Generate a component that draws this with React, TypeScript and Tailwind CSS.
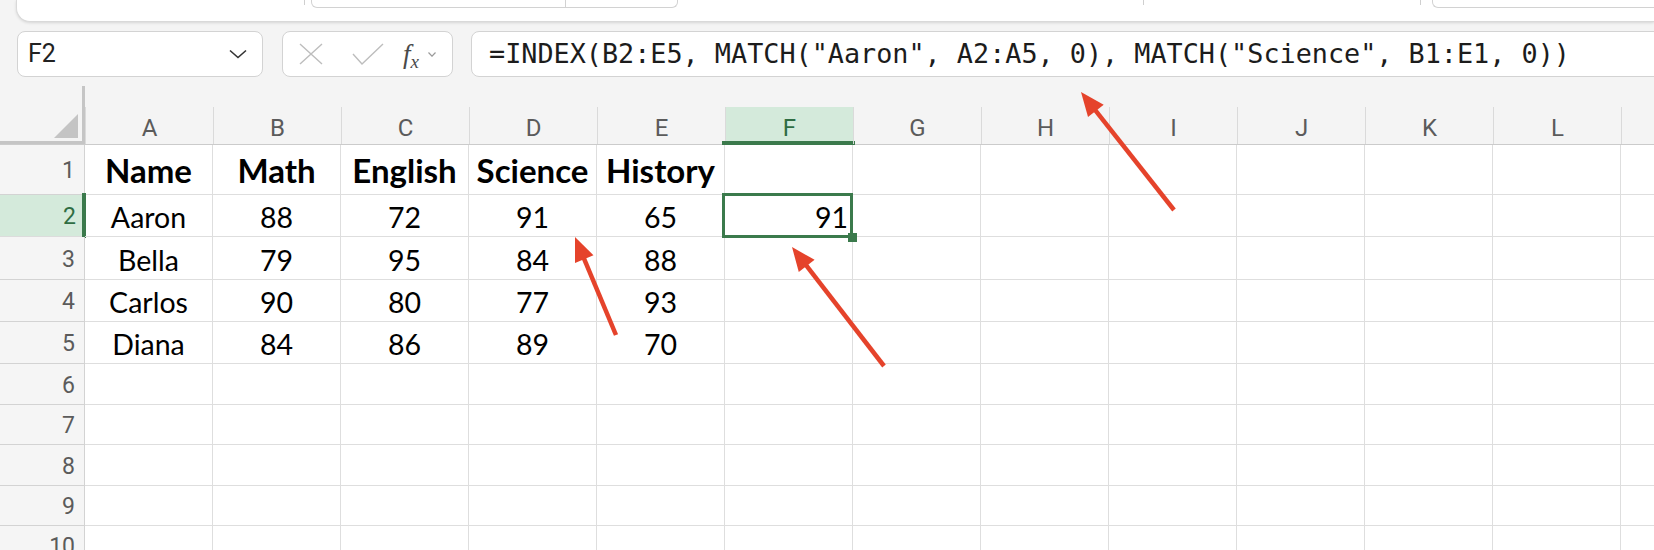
import React from 'react';

const COLUMNS = ['A', 'B', 'C', 'D', 'E', 'F', 'G', 'H', 'I', 'J', 'K', 'L', 'M'];
const ROW_HEIGHTS = [50, 42, 43, 42, 42, 41, 40, 41, 40, 40];
const HEADINGS = ['Name', 'Math', 'English', 'Science', 'History'];
const DATA = [
  ['Aaron', '88', '72', '91', '65'],
  ['Bella', '79', '95', '84', '88'],
  ['Carlos', '90', '80', '77', '93'],
  ['Diana', '84', '86', '89', '70'],
];

const FORMULA = '=INDEX(B2:E5, MATCH("Aaron", A2:A5, 0), MATCH("Science", B1:E1, 0))';

const ARROWS = [
  { from: [1174, 210], to: [1081, 92] },
  { from: [616, 335], to: [575, 237] },
  { from: [884, 366], to: [792, 247] },
];

function arrowHead(from: number[], to: number[]) {
  const dx = to[0] - from[0];
  const dy = to[1] - from[1];
  const len = Math.hypot(dx, dy);
  const ux = dx / len;
  const uy = dy / len;
  const headLen = 24;
  const halfW = 10;
  const bx = to[0] - ux * headLen;
  const by = to[1] - uy * headLen;
  return {
    shaftEnd: [bx + ux * 2, by + uy * 2],
    points: `${to[0]},${to[1]} ${bx - uy * halfW},${by + ux * halfW} ${bx + uy * halfW},${by - ux * halfW}`,
  };
}

const TopPanel: React.FC = () => (
  <div className="ml-[16px] h-[22px] overflow-hidden rounded-bl-[14px] bg-white border-b border-l border-[#d9d9d9] shadow-[0_1px_3px_rgba(0,0,0,0.12)] flex items-start">
    <div className="w-[287px] shrink-0" />
    <div className="w-px h-[5px] shrink-0 bg-[#cfcfcf]" />
    <div className="ml-[6px] w-[367px] h-[8px] shrink-0 rounded-b-[6px] border border-t-0 border-[#d2d2d2] flex">
      <div className="w-[254px] border-r border-[#d2d2d2]" />
    </div>
    <div className="ml-[465px] w-px h-[5px] shrink-0 bg-[#cfcfcf]" />
    <div className="ml-[276px] w-px h-[5px] shrink-0 bg-[#cfcfcf]" />
    <div className="ml-[11px] w-[260px] h-[8px] shrink-0 rounded-bl-[6px] border-l border-b border-[#d2d2d2]" />
  </div>
);

const FormulaBar: React.FC = () => (
  <div className="mt-[9px] h-[46px] flex pl-[17px]">
    <div className="w-[246px] shrink-0 h-full rounded-[8px] border border-[#d3d3d3] bg-white flex items-center pl-[10px] pr-[15px]">
      <span className="flex-1 text-[25px] text-[#222] font-['Roboto',sans-serif]">F2</span>
      <svg width="18" height="10" viewBox="0 0 18 10" fill="none" stroke="#333" strokeWidth="1.6">
        <path d="M1 1.5 L9 8.5 L17 1.5" />
      </svg>
    </div>
    <div className="ml-[19px] w-[171px] shrink-0 h-full rounded-[8px] border border-[#d3d3d3] bg-white flex items-center pl-[15px]">
      <svg width="26" height="22" viewBox="0 0 26 22" fill="none" stroke="#bdbdbd" strokeWidth="1.4">
        <path d="M2 1 L24 21 M24 1 L2 21" />
      </svg>
      <svg className="ml-[28px]" width="32" height="22" viewBox="0 0 32 22" fill="none" stroke="#bdbdbd" strokeWidth="1.4">
        <path d="M1 11 L10 21 L31 1" />
      </svg>
      <span className="ml-[19px] text-[27px] italic text-[#4a4a4a] font-['Liberation_Serif',serif] leading-none">
        f<span className="text-[19px] font-['Liberation_Serif',serif] relative top-[5px] italic">x</span>
      </span>
      <svg className="ml-[9px]" width="8" height="5" viewBox="0 0 8 5" fill="none" stroke="#9a9a9a" strokeWidth="1.2">
        <path d="M0.5 0.5 L4 4.2 L7.5 0.5" />
      </svg>
    </div>
    <div className="ml-[18px] w-[1300px] shrink-0 h-full rounded-[8px] border border-[#d3d3d3] bg-white flex items-center pl-[17px]">
      <span className="text-[26.8px] text-[#1c1c1c] font-['DejaVu_Sans_Mono',monospace] whitespace-pre leading-none">
        {FORMULA}
      </span>
    </div>
  </div>
);

const ColumnHeader: React.FC = () => (
  <div className="h-[68px] flex border-b border-[#cbcbcb]">
    <div className="relative w-[85px] shrink-0">
      <div className="absolute right-0 top-[9px] w-[3px] h-[58px] bg-[#c5c5c5]" />
      <div className="absolute left-0 right-0 bottom-0 h-[3px] bg-[#c5c5c5]" />
      <svg className="absolute left-[54px] top-[37px]" width="24" height="24" viewBox="0 0 24 24">
        <polygon points="24,0 24,24 0,24" fill="#c4c4c4" />
      </svg>
    </div>
    {COLUMNS.map((c) => {
      const active = c === 'F';
      return (
        <div key={c} className="relative w-[128px] shrink-0 flex flex-col justify-end">
          <div
            className={
              active
                ? 'h-[37px] pt-[4px] border-l border-[#dadada] bg-[#d4eadb] flex items-center justify-center text-[24px] text-[#2f6d43] font-["Roboto",sans-serif]'
                : 'h-[37px] pt-[4px] border-l border-[#dadada] flex items-center justify-center text-[24px] text-[#5b5b5b] font-["Roboto",sans-serif]'
            }
          >
            {c}
          </div>
          {active && <div className="absolute -left-[3px] -right-[2px] -bottom-[1px] h-[4px] bg-[#3b7a4c]" />}
        </div>
      );
    })}
  </div>
);

const GridRow: React.FC<{ index: number; height: number }> = ({ index, height }) => {
  const rowNo = index + 1;
  const active = rowNo === 2;
  const values: string[] = rowNo === 1 ? HEADINGS : rowNo <= 5 ? DATA[index - 1] : [];
  return (
    <div className="flex" style={{ height }}>
      <div
        className={
          active
            ? 'relative w-[85px] shrink-0 bg-[#d4eadb] border-b border-[#dcdcdc] flex items-center justify-end pt-[4px] pr-[9px] text-[23px] text-[#2f6d43] font-["Roboto",sans-serif]'
            : 'relative w-[85px] shrink-0 bg-[#f5f5f5] border-r border-b border-[#d3d3d3] flex items-center justify-end pt-[4px] pr-[9px] text-[23px] text-[#5b5b5b] font-["Roboto",sans-serif]'
        }
      >
        {rowNo}
        {active && <div className="absolute right-[-1px] -top-[2px] -bottom-[2px] w-[4px] bg-[#3b7a4c]" />}
      </div>
      {COLUMNS.map((c, ci) => {
        const v = values[ci];
        const selected = c === 'F' && rowNo === 2;
        return (
          <div
            key={c}
            className={
              rowNo === 1
                ? 'relative w-[128px] shrink-0 border-r border-b border-[#dedede] flex items-center justify-center pt-[3px] text-[33px] font-bold text-black font-["Lato",sans-serif]'
                : 'relative w-[128px] shrink-0 border-r border-b border-[#dedede] flex items-center justify-center pt-[4px] text-[28.5px] text-black font-["Lato",sans-serif]'
            }
          >
            {v}
            {selected && (
              <>
                <div className="absolute z-10 -left-[3px] -top-[2px] -right-[1px] -bottom-[2px] border-[3px] border-[#3b7a4c] flex items-center justify-end pt-[4px] pr-[2px] text-[28.5px] text-black">
                  91
                </div>
                <div className="absolute z-10 -right-[5px] -bottom-[6px] w-[9px] h-[9px] bg-[#3b7a4c]" />
              </>
            )}
          </div>
        );
      })}
    </div>
  );
};

export default function App() {
  return (
    <div className="relative w-[1654px] h-[550px] overflow-hidden bg-white">
      <div className="bg-[#f4f4f4]">
        <TopPanel />
        <FormulaBar />
        <ColumnHeader />
      </div>
      <div>
        {ROW_HEIGHTS.map((h, i) => (
          <GridRow key={i} index={i} height={h} />
        ))}
      </div>
      <svg className="absolute inset-0 z-20 pointer-events-none" width="1654" height="550">
        {ARROWS.map((a, i) => {
          const head = arrowHead(a.from, a.to);
          return (
            <g key={i}>
              <line
                x1={a.from[0]}
                y1={a.from[1]}
                x2={head.shaftEnd[0]}
                y2={head.shaftEnd[1]}
                stroke="#e5432b"
                strokeWidth="4.5"
              />
              <polygon points={head.points} fill="#e5432b" />
            </g>
          );
        })}
      </svg>
    </div>
  );
}
